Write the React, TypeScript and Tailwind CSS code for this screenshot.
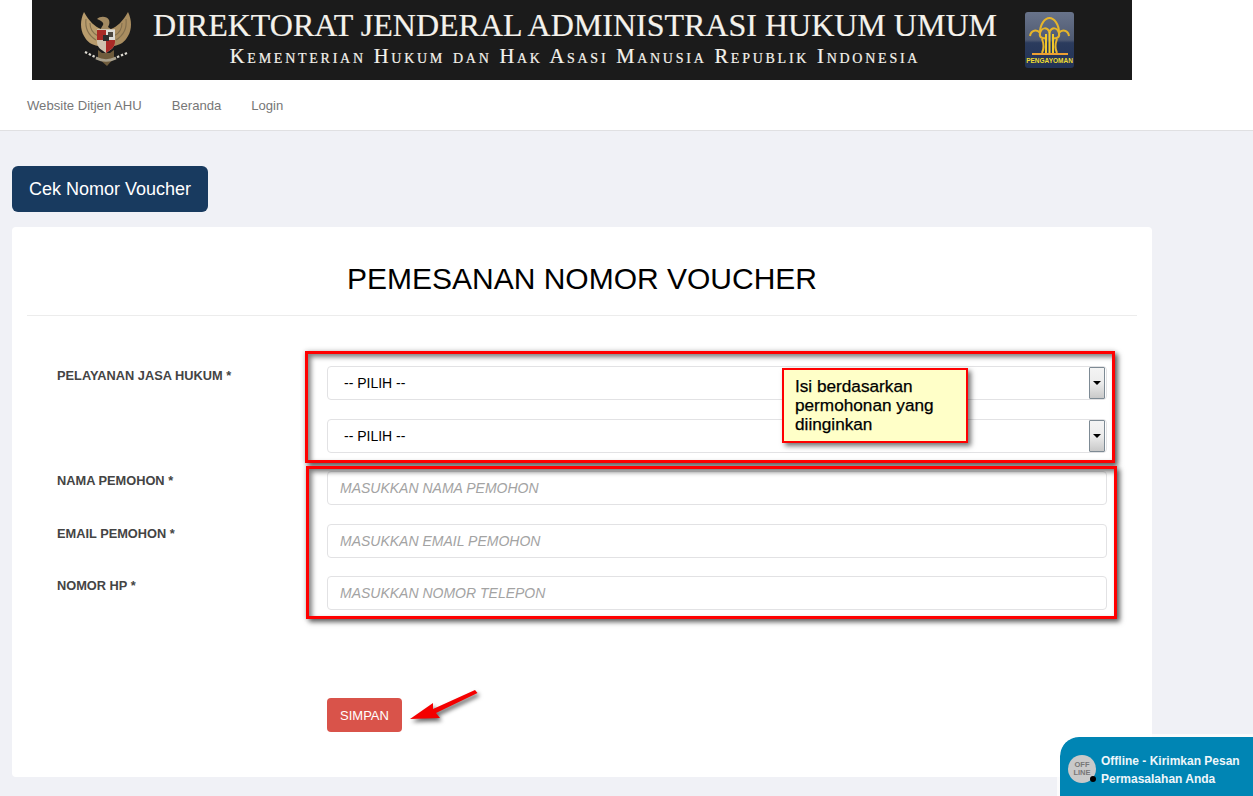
const sans = "font-['Liberation_Sans',Arial,sans-serif]";

function Garuda() {
  return (
    <svg width="50" height="56" viewBox="0 0 50 56" className="shrink-0">
      <path d="M3 0 C-1 8 -1 17 3 24 C6 30 11 33 17 34 L20 17 C14 15 8 9 3 0Z" fill="#b89c6d" />
      <path d="M47 0 C51 8 51 17 47 24 C44 30 39 33 33 34 L30 17 C36 15 42 9 47 0Z" fill="#a98d60" />
      <path d="M5 7 C4 15 7 23 15 28 M9 11 C9 17 11 21 17 24 M45 7 C46 15 43 23 35 28 M41 11 C41 17 39 21 33 24" stroke="#84704e" strokeWidth="1.1" fill="none" />
      <path d="M16 7 C19 4 26 4 28 8 C29 11 28 13 27 15 L31 18 L19 18 L22 13 C23 11 21 9 16 7 Z" fill="#a38a62" />
      <path d="M16 17 H34 V30 C34 36 29 38 25 41 C21 38 16 36 16 30 Z" fill="#cfc3ae" />
      <rect x="16" y="18" width="9" height="10" fill="#a92a26" />
      <rect x="25" y="18" width="9" height="10" fill="#dedcd6" />
      <rect x="27" y="20" width="5" height="5" fill="#4c473f" />
      <path d="M25 28 H34 V30 C34 36 29 38 25 41 Z" fill="#a92a26" />
      <rect x="22" y="23" width="6" height="6" fill="#2c2c2c" />
      <path d="M17 38 L21 41 L29 41 L33 38 L33 46 L26 54 L17 46 Z" fill="#6f5c3c" />
      <path d="M4 40 L16 46 M46 41 L34 46" stroke="#dedbd2" strokeWidth="2.200" strokeDasharray="2.400 1.800" />
      <path d="M15 46 Q25 51 35 46" stroke="#a9a08c" strokeWidth="2.600" fill="none" />
    </svg>
  );
}

function Pengayoman() {
  return (
    <svg width="49" height="56" viewBox="0 0 49 56" className="shrink-0">
      <defs>
        <linearGradient id="pg" x1="0" y1="0" x2="0" y2="1">
          <stop offset="0" stopColor="#68738a" />
          <stop offset="0.5" stopColor="#4f5a72" />
          <stop offset="0.55" stopColor="#2b3b5d" />
          <stop offset="1" stopColor="#223255" />
        </linearGradient>
      </defs>
      <rect width="49" height="56" rx="3" fill="url(#pg)" />
      <g fill="none" stroke="#e7b52a" strokeWidth="2">
        <path d="M5 24 C6 18 12 17 15 21 C15 12 20 6 24.500 6 C29 6 34 12 34 21 C37 17 43 18 44 24" />
        <path d="M15 21 C14 25 17 27 21 26 M34 21 C35 25 32 27 28 26 M15 21 C17 15 22 15 24.500 20 C27 15 32 15 34 21" />
        <path d="M21 22 V41 M24.500 20 V41 M28 22 V41" stroke="#f0c92c" />
        <path d="M17 27 C19 32 19 37 17 41 M32 27 C30 32 30 37 32 41" />
      </g>
      <rect x="7" y="41" width="36" height="2" fill="#eda032" />
      <text x="24.500" y="51" textAnchor="middle" fontSize="6.500" fontWeight="700" fill="#f0dd30" fontFamily="Liberation Sans, sans-serif">PENGAYOMAN</text>
    </svg>
  );
}

function Banner() {
  return (
    <div className="ml-[32px] flex h-[80px] w-[1100px] items-start bg-[#1b1b1b] pl-[49px] pt-[12px]">
      <Garuda />
      <div className="ml-[21px] flex w-[846px] shrink-0 flex-col items-center font-['Liberation_Serif',serif] text-[#f4f2ec]">
        <div className="-mt-[6px] whitespace-nowrap text-[32px] leading-[38px] [-webkit-text-stroke:0.200px_#f4f2ec]">DIREKTORAT JENDERAL ADMINISTRASI HUKUM UMUM</div>
        <div className="whitespace-nowrap text-[20.500px] leading-[24px] tracking-[2.750px] [font-variant:small-caps] [-webkit-text-stroke:0.200px_#f4f2ec]">Kementerian Hukum dan Hak Asasi Manusia Republik Indonesia</div>
      </div>
      <div className="ml-[27px]">
        <Pengayoman />
      </div>
    </div>
  );
}

function SelectField() {
  return (
    <div className="relative h-[34px] w-[780px]">
      <select className={`h-full w-full appearance-none rounded-[4px] border border-[#e2e2e4] bg-white pl-[16px] text-[14px] text-black ${sans}`}>
        <option>-- PILIH --</option>
      </select>
      <div className="absolute right-[2px] top-[1px] flex h-[32px] w-[16px] items-center justify-center rounded-[1px] border border-[#7d8a94] bg-gradient-to-b from-[#f4f4f4] via-[#ececec] to-[#c9c9c9]">
        <div className="h-0 w-0 border-x-[4px] border-t-[4px] border-x-transparent border-t-black" />
      </div>
    </div>
  );
}

function TextField({ placeholder }: { placeholder: string }) {
  return (
    <input
      placeholder={placeholder}
      className={`block h-[34px] w-[780px] rounded-[4px] border border-[#e2e2e4] bg-white px-[12px] text-[14px] placeholder:italic placeholder:text-[#a3a3a3] ${sans}`}
    />
  );
}

function Row({ label, children, className }: { label?: string; children: React.ReactNode; className: string }) {
  return (
    <div className={`flex ${className}`}>
      <label className="w-[270px] shrink-0 pt-[1px] text-[12.800px] font-bold leading-[18px] text-[#444]">{label}</label>
      <div>{children}</div>
    </div>
  );
}

export default function App() {
  return (
    <div className={`relative h-[796px] w-full overflow-hidden bg-[#f0f1f6] ${sans}`}>
      <header className="border-b border-[#e0e0e2] bg-white">
        <Banner />
        <nav className="flex h-[50px] items-center gap-[30px] pl-[27px] pt-[1px] text-[13.100px] text-[#777]">
          <a>Website Ditjen AHU</a>
          <a>Beranda</a>
          <a>Login</a>
        </nav>
      </header>

      <main className="pl-[12px] pt-[35px]">
        <button className="flex h-[46px] w-[196px] items-center justify-center rounded-[6px] bg-[#183a5f] text-[18px] text-white">
          Cek Nomor Voucher
        </button>

        <section className="relative mt-[15px] h-[550px] w-[1140px] rounded-[4px] bg-white px-[15px]">
          <h1 className="pt-[33px] text-center text-[30px] leading-[37px] text-black">PEMESANAN NOMOR VOUCHER</h1>
          <hr className="mt-[18px] border-[#ececec]" />

          <form className="mt-[50px] pl-[30px]">
            <Row label="PELAYANAN JASA HUKUM *" className="mb-[18px]">
              <div className="flex flex-col gap-[19px]">
                <SelectField />
                <SelectField />
              </div>
            </Row>
            <Row label="NAMA PEMOHON *" className="mb-[19px]">
              <TextField placeholder="MASUKKAN NAMA PEMOHON" />
            </Row>
            <Row label="EMAIL PEMOHON *" className="mb-[18px]">
              <TextField placeholder="MASUKKAN EMAIL PEMOHON" />
            </Row>
            <Row label="NOMOR HP *" className="mb-[88px]">
              <TextField placeholder="MASUKKAN NOMOR TELEPON" />
            </Row>
            <Row className="">
              <button type="button" className="h-[34px] w-[75px] rounded-[4px] bg-[#d9534a] pt-[1px] text-[13px] text-white">SIMPAN</button>
            </Row>
          </form>

          <div className="pointer-events-none absolute left-[293px] top-[124px] h-[112px] w-[810px] border-[3px] border-[#ff0000] shadow-[3px_3px_5px_rgba(0,0,0,0.6),inset_3px_3px_5px_rgba(0,0,0,0.5),0_0_5px_rgba(0,0,0,0.2)]" />
          <div className="pointer-events-none absolute left-[294px] top-[239px] h-[153px] w-[811px] border-[3px] border-[#ff0000] shadow-[3px_3px_5px_rgba(0,0,0,0.6),inset_3px_3px_5px_rgba(0,0,0,0.5),0_0_5px_rgba(0,0,0,0.2)]" />

          <div className="absolute left-[770px] top-[141px] h-[75px] w-[186px] border-[2px] border-[#ff0000] bg-[#ffffc8] pl-[11px] pt-[7px] text-[17.200px] leading-[19px] text-black shadow-[3px_3px_5px_rgba(0,0,0,0.55)] [-webkit-text-stroke:0.250px_black]">
            Isi berdasarkan
            <br />
            permohonan yang
            <br />
            diinginkan
          </div>

          <svg width="76" height="36" viewBox="0 0 76 36" className="absolute left-[396px] top-[461px] drop-shadow-[2px_3px_2px_rgba(0,0,0,0.6)]">
            <path d="M2 31 L25 15 L25 21 L67 2 L69.500 5 L28 25 L32 30 Z" fill="#f40000" />
          </svg>
        </section>
      </main>

      <aside className="absolute bottom-0 right-0 flex h-[62px] w-[196px] items-start rounded-tl-[22px] border-l-[3px] border-t-[3px] border-white/70 bg-[#0085b4] bg-clip-padding pl-[8px] pt-[18px]">
        <div className="relative mr-[5px] flex h-[28px] w-[28px] shrink-0 flex-col items-center justify-center rounded-full bg-[#c9c9c9] text-[7.500px] font-bold leading-[8px] text-[#777]">
          <span>OFF</span>
          <span>LINE</span>
          <span className="absolute bottom-[1px] right-[0px] h-[6px] w-[6px] rounded-full bg-black" />
        </div>
        <div className="-mt-[2px] whitespace-nowrap text-[12px] font-bold leading-[17.500px] text-[#eef6fa]">
          Offline - Kirimkan Pesan
          <br />
          Permasalahan Anda
        </div>
      </aside>
    </div>
  );
}
